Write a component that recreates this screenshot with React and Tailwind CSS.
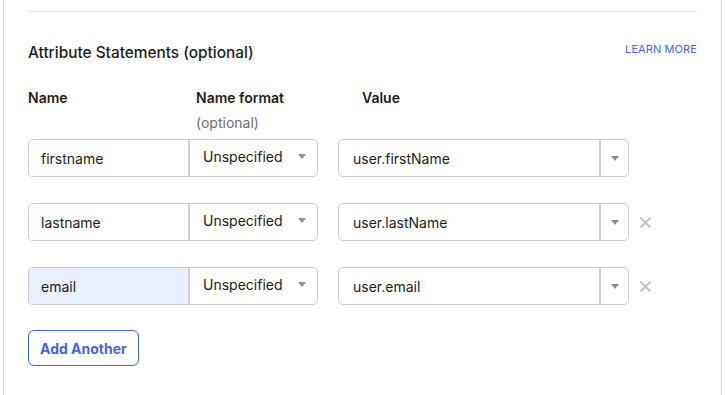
import React from "react";

const rows = [
  { name: "firstname", value: "user.firstName", removable: false, filled: false },
  { name: "lastname", value: "user.lastName", removable: true, filled: false },
  { name: "email", value: "user.email", removable: true, filled: true },
];

function Caret() {
  return (
    <svg width="8" height="5" viewBox="0 0 8 5" className="text-[#8c8c96]">
      <path d="M0 0h8L4 5z" fill="currentColor" />
    </svg>
  );
}

function RemoveIcon() {
  return (
    <svg width="13" height="13" viewBox="0 0 13 13" className="text-[#c4c4c8]">
      <path d="M1.5 1.5l10 10M11.5 1.5l-10 10" stroke="currentColor" strokeWidth="2" />
    </svg>
  );
}

function AttributeRow({ row }) {
  return (
    <div className="flex items-center h-[38px]">
      {/* Name + format */}
      <div className="flex w-[290px] h-full border border-[#c9c9ce] rounded-[5px] overflow-hidden">
        <div
          className={
            row.filled
              ? "w-[161px] flex items-center pl-[12px] bg-[#e8f0fe] border-r-2 border-[#cfcfd3]"
              : "w-[161px] flex items-center pl-[12px] bg-white border-r-2 border-[#cfcfd3]"
          }
        >
          {row.name}
        </div>
        <div className="flex-1 flex items-center justify-between pl-[13px] pr-[11px] pb-[4px]">
          <span>Unspecified</span>
          <Caret />
        </div>
      </div>

      {/* Value */}
      <div className="ml-[20px] flex w-[291px] h-full border border-[#c9c9ce] rounded-[5px] overflow-hidden">
        <div className="flex-1 flex items-center pl-[14px] border-r-2 border-[#cfcfd3]">
          {row.value}
        </div>
        <div className="w-[27px] flex items-center justify-center">
          <Caret />
        </div>
      </div>

      {row.removable && (
        <button className="ml-[10px] flex items-center">
          <RemoveIcon />
        </button>
      )}
    </div>
  );
}

export default function App() {
  return (
    <div
      className="w-[725px] h-[395px] bg-white overflow-hidden text-[14px] text-[#1d1d21]"
      style={{ fontFamily: "Inter, 'Noto Sans', sans-serif" }}
    >
      <div className="ml-[3px] w-[719px] h-full border-x border-[#d4d4d8] px-[24px] pt-[11px]">
        <div className="border-t border-[#e0e0e4]" />

        {/* Section header */}
        <div className="flex items-start justify-between mt-[31px]">
          <h3 className="text-[15.4px] font-medium leading-[20px]">
            Attribute Statements (optional)
          </h3>
          <a className="text-[11px] text-[#4a63e0] leading-[14px] mt-[-1px] tracking-[0.1px]">
            LEARN MORE
          </a>
        </div>

        {/* Column headers */}
        <div className="flex mt-[25px] leading-[20px]">
          <div className="w-[168px] font-semibold">Name</div>
          <div className="w-[166px]">
            <div className="font-semibold">Name format</div>
            <div className="text-[#6e6e78] mt-[5px]">(optional)</div>
          </div>
          <div className="font-semibold">Value</div>
        </div>

        {/* Rows */}
        <div className="flex flex-col gap-[26px] mt-[6px]">
          {rows.map((row) => (
            <AttributeRow key={row.name} row={row} />
          ))}
        </div>

        <button className="mt-[25px] h-[36px] px-[11px] border border-[#4a63e0] rounded-[6px] text-[#4a63e0] font-bold">
          Add Another
        </button>
      </div>
    </div>
  );
}
